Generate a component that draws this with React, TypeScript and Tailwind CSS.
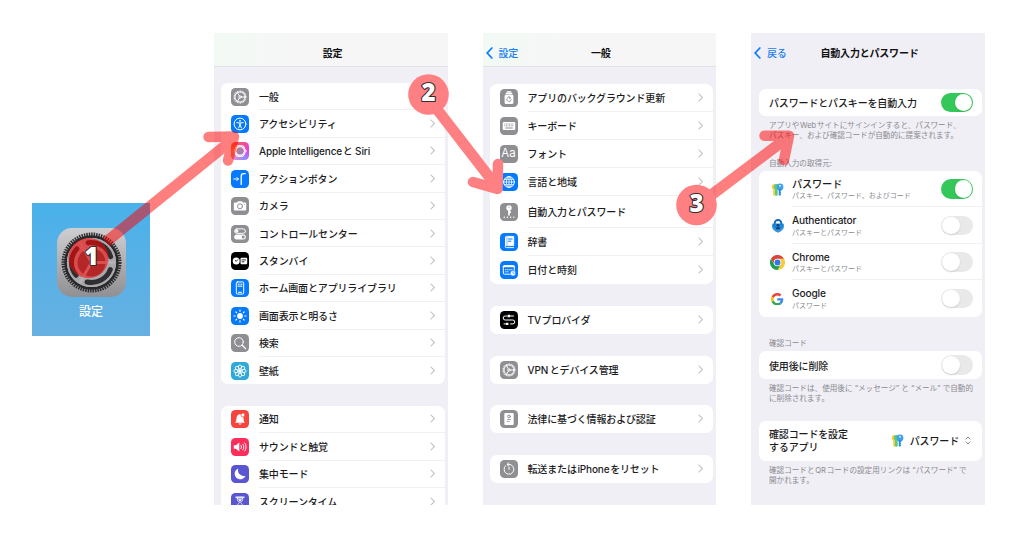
import type { ReactNode } from "react";
import { clsx } from "clsx";

type Item = {
  label: string;
  icon: ReactNode;
  color: string;
  height: string;
};

const FONT = "font-['Inter','Noto_Sans_CJK_JP',sans-serif]";

function Glyph({ children }: { children: ReactNode }) {
  return (
    <svg
      viewBox="0 0 18 18"
      className="h-[18px] w-[18px]"
      fill="none"
      stroke="#fff"
      strokeWidth="1"
      strokeLinecap="round"
      strokeLinejoin="round"
    >
      {children}
    </svg>
  );
}

const gearIcon = (
  <Glyph>
    <circle cx="9" cy="9" r="5.900" strokeWidth="1.200" strokeDasharray="1 0.600" strokeLinecap="butt" />
    <circle cx="9" cy="9" r="5" />
    <circle cx="9" cy="9" r="1.200" />
    <path d="M10.400 9h3.600M8.200 7.600 6.500 4.700M8.200 10.400l-1.700 2.900" />
  </Glyph>
);

const accessibilityIcon = (
  <Glyph>
    <circle cx="9" cy="9" r="5.900" />
    <circle cx="9" cy="5.800" r="0.900" fill="#fff" stroke="none" />
    <path d="M5.800 7.600 9 8.100l3.200-.5M9 8v2M9 9.600l-1.300 3.300M9 9.600l1.300 3.300" />
  </Glyph>
);

const siriIcon = (
  <Glyph>
    <circle cx="9" cy="9" r="3.200" fill="#a583a8" stroke="none" />
    <g strokeWidth="0.9">
      <ellipse cx="9" cy="9" rx="6" ry="4.200" />
      <ellipse cx="9" cy="9" rx="6" ry="4.200" transform="rotate(60 9 9)" />
      <ellipse cx="9" cy="9" rx="6" ry="4.200" transform="rotate(120 9 9)" />
    </g>
  </Glyph>
);

const actionIcon = (
  <Glyph>
    <path d="M2.800 9h4.600M5.800 7.400 7.400 9l-1.600 1.600" />
    <path d="M14.200 3.600h-1.400c-1.600 0-2.600 1-2.600 2.600v8.200" strokeWidth="1.300" />
  </Glyph>
);

const cameraIcon = (
  <Glyph>
    <path d="M3.800 5.600h2.400l.8-1.400h4l.8 1.400h2.400a1 1 0 0 1 1 1v5.800a1 1 0 0 1-1 1H3.800a1 1 0 0 1-1-1V6.600a1 1 0 0 1 1-1Z" fill="#fff" stroke="none" />
    <circle cx="9" cy="9.300" r="2.500" stroke="#8e8e93" />
    <circle cx="13.600" cy="7.200" r="0.500" fill="#8e8e93" stroke="none" />
  </Glyph>
);

const controlIcon = (
  <Glyph>
    <rect x="3.600" y="3.900" width="10.800" height="4.400" rx="2.200" />
    <circle cx="5.800" cy="6.100" r="1.700" fill="#fff" stroke="none" />
    <rect x="3.200" y="9.600" width="11.600" height="5" rx="2.500" fill="#fff" stroke="none" />
    <circle cx="12.200" cy="12.100" r="1.500" fill="#8e8e93" stroke="none" />
  </Glyph>
);

const standbyIcon = (
  <Glyph>
    <circle cx="5.200" cy="9" r="3.500" fill="#fff" stroke="none" />
    <path d="M4.200 8.400 5.200 9.300 6.600 7.800" stroke="#000" strokeWidth="0.800" />
    <rect x="9.500" y="5.700" width="6.700" height="6.600" rx="1" fill="#fff" stroke="none" />
    <path d="M11 7.900h3.600M11 9.800h2" stroke="#000" strokeWidth="0.800" />
  </Glyph>
);

const homeIcon = (
  <Glyph>
    <rect x="5.300" y="2.900" width="7.400" height="12.200" rx="1.300" />
    <path d="M7 5.200h1.300M9.700 5.200H11M7 7.200h4M7.400 13.300h3.200" />
  </Glyph>
);

const brightnessIcon = (
  <Glyph>
    <circle cx="9" cy="9" r="2.900" fill="#fff" stroke="none" />
    <path d="M9 3v1.200M9 13.800V15M3 9h1.200M13.800 9H15M4.800 4.800l.8.8M12.400 12.400l.8.8M4.800 13.200l.8-.8M12.400 5.600l.8-.8" strokeWidth="1.200" />
  </Glyph>
);

const searchIcon = (
  <Glyph>
    <circle cx="8" cy="8" r="4.300" />
    <path d="m11.200 11.200 3.400 3.400" strokeWidth="1.300" />
  </Glyph>
);

const wallpaperIcon = (
  <Glyph>
    {[0, 45, 90, 135, 180, 225, 270, 315].map((deg) => (
      <ellipse key={deg} cx="9" cy="5" rx="1.600" ry="2.100" transform={`rotate(${deg} 9 9)`} strokeWidth="0.900" />
    ))}
    <circle cx="9" cy="9" r="1.700" fill="#fff" stroke="none" />
  </Glyph>
);

const bellIcon = (
  <Glyph>
    <path d="M4 12.700c1-1 1.300-2 1.400-4C5.600 5.800 7 4.200 9 4.200s3.400 1.600 3.600 4.500c.1 2 .4 3 1.400 4Z" fill="#fff" stroke="none" />
    <path d="M7.400 13.500a1.700 1.700 0 0 0 3.200 0Z" fill="#fff" stroke="none" />
    <circle cx="12" cy="5" r="2" fill="#fff" stroke="#f6453c" strokeWidth="0.700" />
  </Glyph>
);

const soundIcon = (
  <Glyph>
    <path d="M2.800 7.200h2.100L8.300 4.500v9L4.900 10.800H2.800Z" fill="#fff" stroke="none" />
    <path d="M10 7.400c.6.900.6 2.300 0 3.200M11.900 6.200c1.200 1.600 1.200 4 0 5.600M13.800 5c1.700 2.300 1.700 5.700 0 8" strokeWidth="0.900" />
  </Glyph>
);

const moonIcon = (
  <Glyph>
    <path d="M7.300 3.500a5.600 5.600 0 1 0 7.200 7.300A5.800 5.800 0 0 1 7.300 3.500Z" fill="#fff" stroke="none" />
  </Glyph>
);

const hourglassIcon = (
  <Glyph>
    <path d="M5 4.200h8M5 14.800h8" strokeWidth="1.300" />
    <path d="M6.200 5h5.600c0 2.400-.9 3.300-2.200 4.500 1.300 1.200 2.200 2.200 2.200 4.800H6.200c0-2.600.9-3.600 2.200-4.800C7.100 8.300 6.200 7.400 6.200 5Z" strokeWidth="0.900" />
    <path d="M7 6.300h4L9 9ZM7 14l2-2.500 2 2.500Z" fill="#fff" stroke="none" />
  </Glyph>
);

const refreshAppIcon = (
  <Glyph>
    <path d="M7.200 2.900h3.600M6.200 4.400h5.600" strokeWidth="1.100" />
    <rect x="4.600" y="5.400" width="8.800" height="9.600" rx="1.500" fill="#fff" stroke="none" />
    <path d="M10.300 8.500A2.200 2.200 0 1 0 11.200 10.500M9 7.900l1.500.6-.9 1.300" stroke="#8e8e93" strokeWidth="0.800" />
  </Glyph>
);

const keyboardIcon = (
  <Glyph>
    <rect x="2.700" y="5" width="12.600" height="8" rx="1.300" fill="#fff" stroke="none" />
    <path d="M4.400 7h9.200M4.400 8.800h9.200" stroke="#8e8e93" strokeDasharray="0.900 0.700" strokeLinecap="butt" />
    <path d="M5.600 11h6.800" stroke="#8e8e93" />
  </Glyph>
);

const globeIcon = (
  <Glyph>
    <circle cx="9" cy="9" r="5.400" />
    <ellipse cx="9" cy="9" rx="2.600" ry="5.400" strokeWidth="0.800" />
    <path d="M9 3.600v10.800M3.600 9h10.800M4.400 6.300h9.200M4.400 11.700h9.200" strokeWidth="0.800" />
  </Glyph>
);

const keyIcon = (
  <Glyph>
    <circle cx="9" cy="5" r="2.700" fill="#fff" stroke="none" />
    <circle cx="9" cy="4.100" r="0.600" fill="#8e8e93" stroke="none" />
    <path d="M9 6v5.800M9.400 9.200h.9" strokeWidth="1.700" />
    <path d="M4.200 14.300h9.600" strokeWidth="1.400" strokeDasharray="0.100 3.100" />
  </Glyph>
);

const dictionaryIcon = (
  <Glyph>
    <path d="M6.200 3.400h7.500v9.200H6.200a1 1 0 0 0 0 2h7.500" strokeWidth="0.900" />
    <path d="M5 13.500V4.600a1.200 1.200 0 0 1 1.200-1.200h7.500v9.200H6.200C5.500 12.600 5 13 5 13.500Z" fill="#fff" stroke="none" />
    <path d="M7 4v8" stroke="#067aff" strokeWidth="0.500" />
    <path d="M8.500 6h3.700M8.500 8.200h2.400" stroke="#067aff" />
  </Glyph>
);

const dateIcon = (
  <Glyph>
    <rect x="3.300" y="4.600" width="11" height="8.600" rx="1.200" />
    <path d="M3.400 5.600h10.800" strokeWidth="1.500" />
    <path d="M5.300 8.700h6.800M5.300 10.800h4" strokeWidth="0.800" strokeDasharray="1 1" />
    <circle cx="13" cy="12.200" r="2.700" fill="#fff" stroke="#067aff" strokeWidth="0.500" />
    <path d="M13 11v1.300h1" stroke="#067aff" strokeWidth="0.600" />
  </Glyph>
);

const tvIcon = (
  <Glyph>
    <path d="M6.500 5H5.200a2 2 0 0 0 0 4h7.600a1.900 1.900 0 0 1 0 3.900H10.500" />
    <path d="M7.500 5h2.600M8.400 12.900H6" strokeWidth="2.400" strokeLinecap="butt" />
    <path d="M10 5h3.500M4 12.900h2" />
  </Glyph>
);

const legalIcon = (
  <Glyph>
    <rect x="4.300" y="3" width="9.400" height="12" rx="1" fill="#fff" stroke="none" />
    <circle cx="9" cy="6.500" r="1.400" stroke="#8e8e93" />
    <path d="M7.600 9.500h2.800M7.200 11.400h2.200" stroke="#8e8e93" strokeWidth="0.800" />
  </Glyph>
);

const resetIcon = (
  <Glyph>
    <path d="M5.600 5.700A4.900 4.900 0 1 0 9 4.400H7.200" />
    <path d="M8.900 2.600 7 4.400 8.900 6.200M9 9.400V7.300" />
  </Glyph>
);

const fontIcon = <span className="font-['Inter'] text-[11.500px] leading-none text-white">Aa</span>;

const ROW = "h-[27.400px]";

const settingsMain: Item[] = [
  { label: "一般", icon: gearIcon, color: "bg-[#8e8e93]", height: ROW },
  { label: "アクセシビリティ", icon: accessibilityIcon, color: "bg-[#067aff]", height: ROW },
  {
    label: "Apple Intelligence\u200aと Siri",
    icon: siriIcon,
    color: "bg-[conic-gradient(from_30deg,#f04c9c,#e63ee6,#8f8cff,#d989d8,#ff8a3c,#ff5a4e,#f04c9c)]",
    height: ROW,
  },
  { label: "アクションボタン", icon: actionIcon, color: "bg-[#067aff]", height: ROW },
  { label: "カメラ", icon: cameraIcon, color: "bg-[#8e8e93]", height: ROW },
  { label: "コントロールセンター", icon: controlIcon, color: "bg-[#8e8e93]", height: ROW },
  { label: "スタンバイ", icon: standbyIcon, color: "bg-black", height: ROW },
  { label: "ホーム画面とアプリライブラリ", icon: homeIcon, color: "bg-[#067aff]", height: ROW },
  { label: "画面表示と明るさ", icon: brightnessIcon, color: "bg-[#067aff]", height: ROW },
  { label: "検索", icon: searchIcon, color: "bg-[#8e8e93]", height: ROW },
  { label: "壁紙", icon: wallpaperIcon, color: "bg-[#2ea9dc]", height: ROW },
];

const settingsSub: Item[] = [
  { label: "通知", icon: bellIcon, color: "bg-[#f6453c]", height: ROW },
  { label: "サウンドと触覚", icon: soundIcon, color: "bg-[#fb2d5a]", height: ROW },
  { label: "集中モード", icon: moonIcon, color: "bg-[#5a55d0]", height: ROW },
  { label: "スクリーンタイム", icon: hourglassIcon, color: "bg-[#5a55d0]", height: ROW },
];

const generalMain: Item[] = [
  { label: "アプリのバックグラウンド更新", icon: refreshAppIcon, color: "bg-[#8e8e93]", height: "h-[28px]" },
  { label: "キーボード", icon: keyboardIcon, color: "bg-[#8e8e93]", height: "h-[28px]" },
  { label: "フォント", icon: fontIcon, color: "bg-[#8e8e93]", height: "h-[28px]" },
  { label: "言語と地域", icon: globeIcon, color: "bg-[#067aff]", height: "h-[28px]" },
  { label: "自動入力とパスワード", icon: keyIcon, color: "bg-[#8e8e93]", height: "h-[31.500px]" },
  { label: "辞書", icon: dictionaryIcon, color: "bg-[#067aff]", height: "h-[28.700px]" },
  { label: "日付と時刻", icon: dateIcon, color: "bg-[#067aff]", height: "h-[28px]" },
];

const generalSingles: Item[] = [
  { label: "TV\u200aプロバイダ", icon: tvIcon, color: "bg-black", height: "h-[28px]" },
  { label: "VPN\u2009とデバイス管理", icon: gearIcon, color: "bg-[#8e8e93]", height: "h-[28px]" },
  { label: "法律に基づく情報および認証", icon: legalIcon, color: "bg-[#8e8e93]", height: "h-[28px]" },
  { label: "転送または\u200aiPhone\u200aをリセット", icon: resetIcon, color: "bg-[#8e8e93]", height: "h-[28px]" },
];

function Chevron() {
  return (
    <svg viewBox="0 0 5 9" className="h-[9px] w-[5px] shrink-0" fill="none" stroke="#c6c6ca" strokeWidth="1.100">
      <path d="M.6.6 4.400 4.500.6 8.400" />
    </svg>
  );
}

function List({ items, className }: { items: Item[]; className?: string }) {
  return (
    <ul className={clsx("shrink-0 overflow-hidden rounded-[7px] bg-white", className)}>
      {items.map((item, i) => (
        <li key={item.label} className={clsx("flex items-center gap-[10px] pl-[10px]", item.height)}>
          <span className={clsx("flex h-[18px] w-[18px] shrink-0 items-center justify-center overflow-hidden rounded-[4.500px]", item.color)}>
            {item.icon}
          </span>
          <div
            className={clsx(
              "flex h-full flex-1 items-center justify-between border-b pr-[10px]",
              i < items.length - 1 ? "border-[#f0f0f2]" : "border-transparent",
            )}
          >
            <span className="pt-[1px] text-[10px] leading-none font-medium tracking-[-0.015em] whitespace-nowrap text-[#1c1c1e]">
              {item.label}
            </span>
            <Chevron />
          </div>
        </li>
      ))}
    </ul>
  );
}

function NavBar({ title, back, plain }: { title: string; back?: string; plain?: boolean }) {
  return (
    <header
      className={clsx(
        "grid h-[34px] shrink-0 grid-cols-[60px_1fr_60px] items-center pt-[6px] pl-[3px] leading-none",
        !plain && "border-b border-[#e2e2e5] bg-linear-to-r from-[#f2faf4] via-[#f6f6f7] via-35% to-[#f6f6f7]",
      )}
    >
      <span className="flex items-center gap-[6px] text-[10px] tracking-[-0.02em] text-[#1a80ee]">
        {back && (
          <>
            <svg viewBox="0 0 7 12" className="h-3 w-[7px]" fill="none" stroke="#0a7aff" strokeWidth="1.700" strokeLinecap="round">
              <path d="M5.900 1 1.200 6l4.700 5" />
            </svg>
            <span className="font-medium whitespace-nowrap">{back}</span>
          </>
        )}
      </span>
      <h2 className="text-center text-[10px] font-bold tracking-[-0.02em] whitespace-nowrap text-[#111]">{title}</h2>
    </header>
  );
}

function Toggle({ on }: { on?: boolean }) {
  return (
    <span
      className={clsx(
        "flex h-[19.500px] w-8 shrink-0 items-center rounded-full p-px",
        on ? "justify-end bg-[#34c759]" : "justify-start bg-[#e9e9ea]",
      )}
    >
      <span className="h-[17.500px] w-[17.500px] rounded-full bg-white shadow-[0_1px_2px_rgba(0,0,0,0.12)]" />
    </span>
  );
}

function KeysIcon({ className }: { className?: string }) {
  return (
    <svg viewBox="0 0 13 14" className={className}>
      <path d="M3.500 1a2.800 2.800 0 0 0-1.300 5.300V12l1.300 1 1.200-1V1.300A2.800 2.800 0 0 0 3.500 1Z" fill="#f7cf3e" />
      <path d="M5.600 1A2.800 2.800 0 0 0 4 6.200V12l1.400 1 1.300-1V1.200A2.800 2.800 0 0 0 5.600 1Z" fill="#58c986" />
      <circle cx="9" cy="4" r="3.400" fill="#3fa2e6" />
      <path d="M7.700 6h2.500v1.800l-.8.8.8.9-.8.9.8.9-1.300 1.700-1.200-1.200Z" fill="#2a8edb" />
      <circle cx="9" cy="2.800" r="0.900" fill="#fff" />
    </svg>
  );
}

function AuthenticatorIcon() {
  return (
    <svg viewBox="0 0 14 14" className="h-[14px] w-[14px]">
      <path d="M3.700 5.500V4.300a3.300 3.300 0 0 1 6.600 0v1.200" fill="none" stroke="#1565b5" strokeWidth="1.800" />
      <path d="M2.400 4.400h9.200c.7 0 1.200.5 1.200 1.200v1.800c0 2.700-2.700 4.800-5.800 6.200C3.900 12.200 1.200 10.100 1.200 7.400V5.600c0-.7.500-1.200 1.200-1.200Z" fill="#1a86d6" />
      <path d="M1.300 7.400c0 2.700 2.600 4.800 5.700 6.200 3.100-1.400 5.700-3.500 5.700-6.200L7 10.800Z" fill="#3b93dd" />
      <circle cx="7" cy="6.300" r="1.300" fill="#0c3c78" />
      <path d="M4.800 10.300c0-1.500 1-2.300 2.200-2.300s2.200.8 2.200 2.300Z" fill="#0c3c78" />
    </svg>
  );
}

function ChromeIcon() {
  return (
    <svg viewBox="0 0 48 48" className="h-[15px] w-[15px]">
      <path d="M24 12h20.800A24 24 0 0 1 24 48l10.400-18Z" fill="#fcc934" />
      <path d="M13.600 30 3.200 12A24 24 0 0 0 24 48l10.400-18Z" fill="#1e9e4f" />
      <path d="M24 12h20.800A24 24 0 0 0 3.200 12l10.400 18Z" fill="#db4437" />
      <circle cx="24" cy="24" r="12" fill="#fff" />
      <circle cx="24" cy="24" r="9.500" fill="#2f78ea" />
    </svg>
  );
}

function GoogleIcon() {
  return (
    <svg viewBox="0 0 48 48" className="h-[12.500px] w-[12.500px]">
      <path fill="#ea4335" d="M24 9.500c3.500 0 6.700 1.200 9.200 3.600l6.900-6.900C35.900 2.400 30.500 0 24 0 14.600 0 6.500 5.400 2.600 13.200l8 6.200C12.400 13.700 17.700 9.500 24 9.500z" />
      <path fill="#4285f4" d="M47 24.600c0-1.600-.2-3.100-.4-4.600H24v9h12.900c-.6 3-2.200 5.500-4.700 7.200l7.700 6C44.400 38 47 31.800 47 24.600z" />
      <path fill="#fbbc05" d="M10.500 28.600a14.500 14.500 0 0 1 0-9.200l-8-6.200a24 24 0 0 0 0 21.600l8-6.200z" />
      <path fill="#34a853" d="M24 48c6.500 0 11.900-2.100 15.900-5.800l-7.700-6c-2.200 1.500-4.900 2.300-8.200 2.300-6.300 0-11.600-4.200-13.500-9.900l-8 6.200C6.500 42.600 14.600 48 24 48z" />
    </svg>
  );
}

const providers = [
  { name: "パスワード", detail: "パスキー、パスワード、およびコード", icon: <KeysIcon className="h-[14px] w-[13px]" />, on: true },
  { name: "Authenticator", detail: "パスキーとパスワード", icon: <AuthenticatorIcon />, on: false },
  { name: "Chrome", detail: "パスキーとパスワード", icon: <ChromeIcon />, on: false },
  { name: "Google", detail: "パスワード", icon: <GoogleIcon />, on: false },
];

function Note({ children, className }: { children: ReactNode; className?: string }) {
  return (
    <p className={clsx("shrink-0 pl-[18px] text-[7.600px] leading-[10px] whitespace-nowrap text-[#8a8a8f]", className)}>
      {children}
    </p>
  );
}

function HomeTile() {
  return (
    <div className="mt-[169.500px] flex h-[133px] w-[118px] shrink-0 flex-col items-center bg-linear-to-b from-[#49b1ea] to-[#66b0e1] pt-[25px]">
      <svg viewBox="0 0 69 69" className="h-[69px] w-[69px]">
        <defs>
          <linearGradient id="tile" x1="0" y1="0" x2="0" y2="1">
            <stop offset="0" stopColor="#cfcfd1" />
            <stop offset="1" stopColor="#909094" />
          </linearGradient>
        </defs>
        <rect width="69" height="69" rx="15" fill="url(#tile)" />
        <circle cx="34.500" cy="34.500" r="28.300" fill="none" stroke="#2c2c2f" strokeWidth="3.400" strokeDasharray="1.500 0.960" />
        <circle cx="34.500" cy="34.500" r="25.900" fill="none" stroke="#29292c" strokeWidth="2.600" />
        <circle cx="34.500" cy="34.500" r="24.600" fill="#a9a9ac" />
        {[0, 120, 240].map((deg) => (
          <path
            key={deg}
            d="M53.300 41.500A20 20 0 0 1 30 54"
            fill="none"
            stroke="#2f2f32"
            strokeWidth="5"
            strokeLinecap="round"
            transform={`rotate(${deg} 34.500 34.500)`}
          />
        ))}
        <circle cx="34.500" cy="34.500" r="14" fill="#57575a" />
        {[0, 120, 240].map((deg) => (
          <path key={deg} d="M36 34.500h22" stroke="#b4b4b7" strokeWidth="2.800" transform={`rotate(${deg} 34.500 34.500)`} />
        ))}
      </svg>
      <span className="mt-[9px] text-[12px] leading-none font-medium text-white">設定</span>
    </div>
  );
}

// Numbered markers and arrows laid over the screens
function Guide() {
  const digit = "font-['Noto_Sans','Open_Sans',sans-serif] text-[24px] font-black";
  return (
    <svg viewBox="0 0 1024 538" className="pointer-events-none absolute inset-0 h-[538px] w-[1024px]" fill="none" strokeLinecap="round" strokeLinejoin="round">
      <g opacity="0.5" stroke="#ff0000" strokeWidth="10.500">
        <path d="M106 242 231 141" strokeLinecap="butt" strokeWidth="11" />
        <path d="M208.500 137 234 136.500 228 160.500" />
        <path d="M228 139.500 231 137.500 230 142Z" />
      </g>
      <g stroke="#fe8082" strokeWidth="10.500">
        <path d="m436 108 59.500 77" strokeWidth="11" />
        <path d="M498 164 497.500 189 473 182" />
      </g>
      <g opacity="0.5" stroke="#ff0000" strokeWidth="10.500">
        <path d="M712 194.500 787 138" strokeLinecap="butt" strokeWidth="11" />
        <path d="M764.500 135.700H789L784 160" />
      </g>
      <circle cx="88.500" cy="258" r="20" fill="#ff0000" opacity="0.550" />
      <circle cx="428.500" cy="94.500" r="20.300" fill="#fe8082" />
      <circle cx="696.500" cy="205" r="20.300" fill="#fe8082" />
      <g fill="#fff" stroke="#3a2a2c" strokeWidth="2.200" textAnchor="middle" style={{ paintOrder: "stroke" }}>
        <text x="91.500" y="264.500" className={digit}>1</text>
        <text x="428.500" y="101" className={digit}>2</text>
        <text x="696.500" y="212" className={digit}>3</text>
      </g>
    </svg>
  );
}

export default function App() {
  return (
    <main className={clsx("relative flex h-[538px] w-[1024px] overflow-hidden bg-white pt-[33px] pl-[32px]", FONT)} lang="ja">
      <HomeTile />

      <section className="ml-[64px] flex h-[471.500px] w-[234px] shrink-0 flex-col overflow-hidden bg-[#f0eff5]">
        <NavBar title="設定" />
        <List items={settingsMain} className="mt-[16px] mr-[3.500px] ml-[7px]" />
        <List items={settingsSub} className="mt-[21.500px] mr-[3.500px] ml-[7px]" />
      </section>

      <section className="ml-[34.500px] flex h-[471.500px] w-[233.500px] shrink-0 flex-col overflow-hidden bg-[#f0eff5]">
        <NavBar title="一般" back="設定" />
        <List items={generalMain} className="mt-[17px] mr-[3px] ml-[7px]" />
        <div className="mt-[21.700px] mr-[3px] ml-[7px] flex flex-col gap-[21.700px]">
          {generalSingles.map((item) => (
            <List key={item.label} items={[item]} />
          ))}
        </div>
      </section>

      <section className="ml-[35px] flex h-[471.500px] w-[234px] shrink-0 flex-col overflow-hidden bg-[#f0eff5] text-[#1c1c1e]">
        <NavBar title="自動入力とパスワード" back="戻る" plain />
        <div className="mt-[21.700px] mr-[3px] ml-2 flex h-[27.300px] shrink-0 items-center justify-between rounded-[7px] bg-white pr-[9px] pl-[10px]">
          <span className="pt-[1px] text-[10px] leading-none font-medium tracking-[-0.015em]">パスワードとパスキーを自動入力</span>
          <Toggle on />
        </div>
        <Note className="mt-[5px]">
          アプリや&#8202;Web&#8202;サイトにサインインすると、パスワード、
          <br />
          パスキー、および確認コードが自動的に提案されます。
        </Note>
        <Note className="mt-[18px]">自動入力の取得元:</Note>
        <ul className="mt-[2px] mr-[3px] ml-2 shrink-0 rounded-[7px] bg-white">
          {providers.map((p, i) => (
            <li key={p.name} className="flex h-[36.500px] items-center pl-[11px]">
              <span className="flex w-[15px] shrink-0 justify-center pt-px">{p.icon}</span>
              <div
                className={clsx(
                  "ml-[7px] flex h-full flex-1 items-center justify-between border-b pt-px pr-[9px]",
                  i < providers.length - 1 ? "border-[#f0f0f2]" : "border-transparent",
                )}
              >
                <div className="flex flex-col gap-[3.500px] pt-px whitespace-nowrap">
                  <span className="text-[10.200px] leading-[10px] font-medium tracking-[-0.015em]">{p.name}</span>
                  <span className="text-[7px] leading-[8px] text-[#8a8a8f]">{p.detail}</span>
                </div>
                <Toggle on={p.on} />
              </div>
            </li>
          ))}
        </ul>
        <Note className="mt-[22px]">確認コード</Note>
        <div className="mt-[2.500px] mr-[3px] ml-2 flex h-[27.500px] shrink-0 items-center justify-between rounded-[7px] bg-white pr-[9px] pl-[10px]">
          <span className="pt-[1px] text-[10px] leading-none font-medium tracking-[-0.015em]">使用後に削除</span>
          <Toggle />
        </div>
        <Note className="mt-[5px]">
          確認コードは、使用後に “メッセージ” と “メール” で自動的
          <br />
          に削除されます。
        </Note>
        <div className="mt-[17px] mr-[3px] ml-2 flex h-10 shrink-0 items-center rounded-[7px] bg-white pr-[11px] pl-[10px] text-[10px] font-medium tracking-[-0.015em]">
          <span className="flex-1 pt-[1px] leading-[13.500px]">
            確認コードを設定
            <br />
            するアプリ
          </span>
          <KeysIcon className="h-[14px] w-[13px]" />
          <span className="ml-[6px] pt-[1px]">パスワード</span>
          <svg viewBox="0 0 6 9" className="ml-[6px] h-[9px] w-[6px]" fill="none" stroke="#7c7c80" strokeWidth="0.900">
            <path d="M.8 3.300 3 1l2.200 2.300M.8 5.700 3 8l2.200-2.300" />
          </svg>
        </div>
        <Note className="mt-[5px]">
          確認コードと&#8202;QR&#8202;コードの設定用リンクは “パスワード” で
          <br />
          開かれます。
        </Note>
      </section>

      <Guide />
    </main>
  );
}
